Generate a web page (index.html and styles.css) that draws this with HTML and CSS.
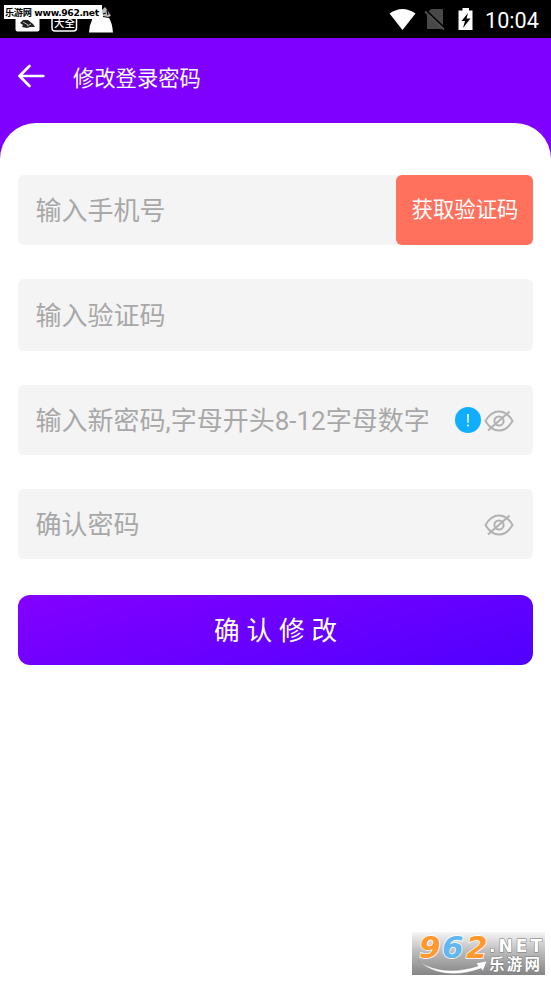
FILE: index.html
```html
<!DOCTYPE html>
<html lang="zh-CN">
<head>
<meta charset="utf-8">
<title>修改登录密码</title>
<link rel="stylesheet" href="styles.css">
</head>
<body>
<div class="statusbar">
  <div class="notices">
    <svg class="notice-icons" width="120" height="38" viewBox="0 0 120 38">
      <rect x="15.500" y="8" width="24" height="23.500" rx="2" fill="#fff"/>
      <path d="M20 23l3-3 5 0 5 4 2 3-5 0-3 1-5-1 1-2z" fill="#222"/>
      <path d="M23 22l5 3M27 26l4-2" stroke="#bbb" stroke-width="1"/>
      <rect x="52" y="8" width="24.500" height="23" rx="3" fill="none" stroke="#fff" stroke-width="1.500"/>
      <path d="M89 32.500Q89 26 92 20V10H103V17L109 18Q112 22 113 32.500z" fill="#fff"/>
      <path d="M102 10l3-3 3 4 3 5-3 1-5-1z" fill="#bbb"/>
      <path d="M103 14l3-1M107 10l1 5" stroke="#111" stroke-width="1.300"/>
    </svg>
    <span class="notice-text">大全</span>
    <span class="site-tag">乐游网 www.962.net</span>
  </div>
  <div class="system">
    <svg width="88" height="24" viewBox="0 0 88 24">
      <path d="M0.500 5.500Q13.500-3.500 26.500 5.500L13.500 22z" fill="#fff"/>
      <path d="M38 5L42 1H54V21H38z" fill="#484848"/>
      <path d="M37 2.500L56 20.500" stroke="#000" stroke-width="2"/>
      <path d="M36 3.500L55 21.500" stroke="#505050" stroke-width="1.800"/>
      <path d="M73.500 2.500V0H80V2.500H83.500V22H69.500V2.500z" fill="#fff"/>
      <path d="M79 5L72.500 13H76L74 20L81.500 10.500H77.500z" fill="#000"/>
    </svg>
    <span class="clock">10:04</span>
  </div>
</div>
<header class="header">
  <svg class="back" width="28" height="24" viewBox="0 0 28 24" fill="none" stroke="#fff" stroke-width="2.700" stroke-linecap="round" stroke-linejoin="round">
    <path d="M11.500 2L1.500 12L11.500 22M1.500 12H25.300"/>
  </svg>
  <h1>修改登录密码</h1>
</header>
<main class="sheet">
  <div class="field">
    <span class="hint">输入手机号</span>
    <button class="send">获取验证码</button>
  </div>
  <div class="field code"><span class="hint">输入验证码</span></div>
  <div class="field">
    <span class="hint">输入新密码,字母开头8-12字母数字</span>
    <svg class="info" width="26" height="26" viewBox="0 0 26 26">
      <circle cx="13" cy="13" r="13" fill="#11adff"/>
      <path d="M12.100 7h1.800l-.3 9h-1.200z" fill="#fff"/>
      <circle cx="13" cy="18.500" r="1" fill="#fff"/>
    </svg>
    <svg class="eye" width="30" height="24" viewBox="0 0 30 24" fill="none" stroke="#b2b2b2" stroke-width="2">
      <path d="M1.500 12Q7 2.500 15 2.500T28.500 12Q23 21.500 15 21.500T1.500 12z"/><circle cx="15" cy="12" r="4.600"/><path d="M4 21.500L25.500 2.500"/>
    </svg>
  </div>
  <div class="field">
    <span class="hint">确认密码</span>
    <svg class="eye" width="30" height="24" viewBox="0 0 30 24" fill="none" stroke="#b2b2b2" stroke-width="2">
      <path d="M1.500 12Q7 2.500 15 2.500T28.500 12Q23 21.500 15 21.500T1.500 12z"/><circle cx="15" cy="12" r="4.600"/><path d="M4 21.500L25.500 2.500"/>
    </svg>
  </div>
  <button class="submit">确认修改</button>
</main>
<div class="watermark">
  <svg width="133" height="43" viewBox="0 0 133 43">
    <defs><linearGradient id="wm" x2="0" y2="1"><stop stop-color="#f6f6f6"/><stop offset=".45" stop-color="#bcbcbc"/><stop offset="1" stop-color="#858585"/></linearGradient></defs>
    <rect width="133" height="43" fill="url(#wm)"/>
    <path d="M6 29Q31 45 66 34L64 31L75 29L71 39L69 36.500Q31 50 6 29z" fill="#fff" stroke="#888" stroke-width=".5"/>
    <text class="wm-number" y="26"><tspan x="7" fill="#ff982d">9</tspan><tspan x="30" fill="#62b8ee">6</tspan><tspan x="54" fill="#ff982d">2</tspan></text>
    <text class="wm-net" x="77" y="20" textLength="53" lengthAdjust="spacing">.NET</text>
    <text class="wm-cn" x="77" y="38" textLength="51">乐游网</text>
  </svg>
</div>
</body>
</html>
```
FILE: styles.css
```css
* { box-sizing: border-box; }
body {
  margin: 0;
  position: relative;
  height: 981px;
  overflow: hidden;
  background: #7f00ff;
  font-family: Roboto, "Noto Sans CJK SC", sans-serif;
  display: flex;
  flex-direction: column;
}
.statusbar {
  height: 38px;
  background: #000;
  display: flex;
  justify-content: space-between;
  flex: none;
}
.notices { position: relative; width: 120px; }
.notice-icons { display: block; }
.notice-text {
  position: absolute;
  left: 54px;
  top: 17px;
  font-size: 10.5px;
  line-height: 14px;
  font-weight: 500;
  color: #fff;
}
.site-tag {
  position: absolute;
  left: 4px;
  top: 5px;
  width: 98px;
  height: 14px;
  background: #fff;
  color: #000;
  font: 700 9.2px/15px "DejaVu Sans", "Noto Sans CJK SC", sans-serif;
  letter-spacing: -0.35px;
  padding-left: 1px;
  white-space: nowrap;
}
.system { display: flex; align-items: flex-start; padding: 8px 13px 0 0; }
.clock {
  margin-left: 8px;
  color: #fff;
  font-size: 21.6px;
  line-height: 25px;
  width: 53px;
  white-space: nowrap;
}
.header {
  height: 85px;
  flex: none;
  display: flex;
  align-items: center;
  padding: 0 0 7px 18px;
  color: #fff;
}
.back { flex: none; margin-top: -2px; }
h1 {
  margin: 3px 0 0 27px;
  font-size: 21.3px;
  line-height: 30px;
  font-weight: 400;
}
.sheet {
  flex: 1;
  background: #fff;
  border-radius: 36px 36px 0 0;
  padding: 52px 18px 0;
  display: flex;
  flex-direction: column;
  gap: 34px;
}
.field {
  height: 70px;
  flex: none;
  display: flex;
  align-items: center;
  background: #f4f4f4;
  border-radius: 6px;
  padding-left: 17.6px;
}
.code { height: 72px; }
.hint {
  flex: 1;
  color: #a8a8a8;
  font-size: 26px;
  line-height: 38px;
  padding-top: 2px;
  white-space: nowrap;
}
button {
  border: 0;
  margin: 0;
  color: #fff;
  font-family: inherit;
}
.send {
  width: 137px;
  height: 70px;
  border-radius: 6px;
  background: #ff705d;
  font-size: 21.4px;
  line-height: 30px;
  padding: 0 0 1px 1px;
}
.info { flex: none; }
.eye { flex: none; margin: 2px 19.5px 0 3px; }
.submit {
  height: 70px;
  margin-top: 2px;
  flex: none;
  border-radius: 12px;
  background: linear-gradient(165deg, #8400ff, #5000ff);
  font-size: 25.6px;
  letter-spacing: 6.9px;
  padding: 0 0 3px 7px;
}
.watermark {
  position: absolute;
  left: 412px;
  top: 932px;
  width: 133px;
  height: 43px;
}
.watermark svg { display: block; }
.wm-number {
  font: italic 700 31px "DejaVu Sans", sans-serif;
  stroke: #fff;
  stroke-width: 1.5px;
  paint-order: stroke;
}
.wm-net, .wm-cn {
  fill: #fff;
  stroke: #777;
  stroke-width: 1px;
  paint-order: stroke;
}
.wm-net { font: 700 17px "DejaVu Sans", sans-serif; }
.wm-cn { font: 700 15.5px "Noto Sans CJK SC", sans-serif; }
```
